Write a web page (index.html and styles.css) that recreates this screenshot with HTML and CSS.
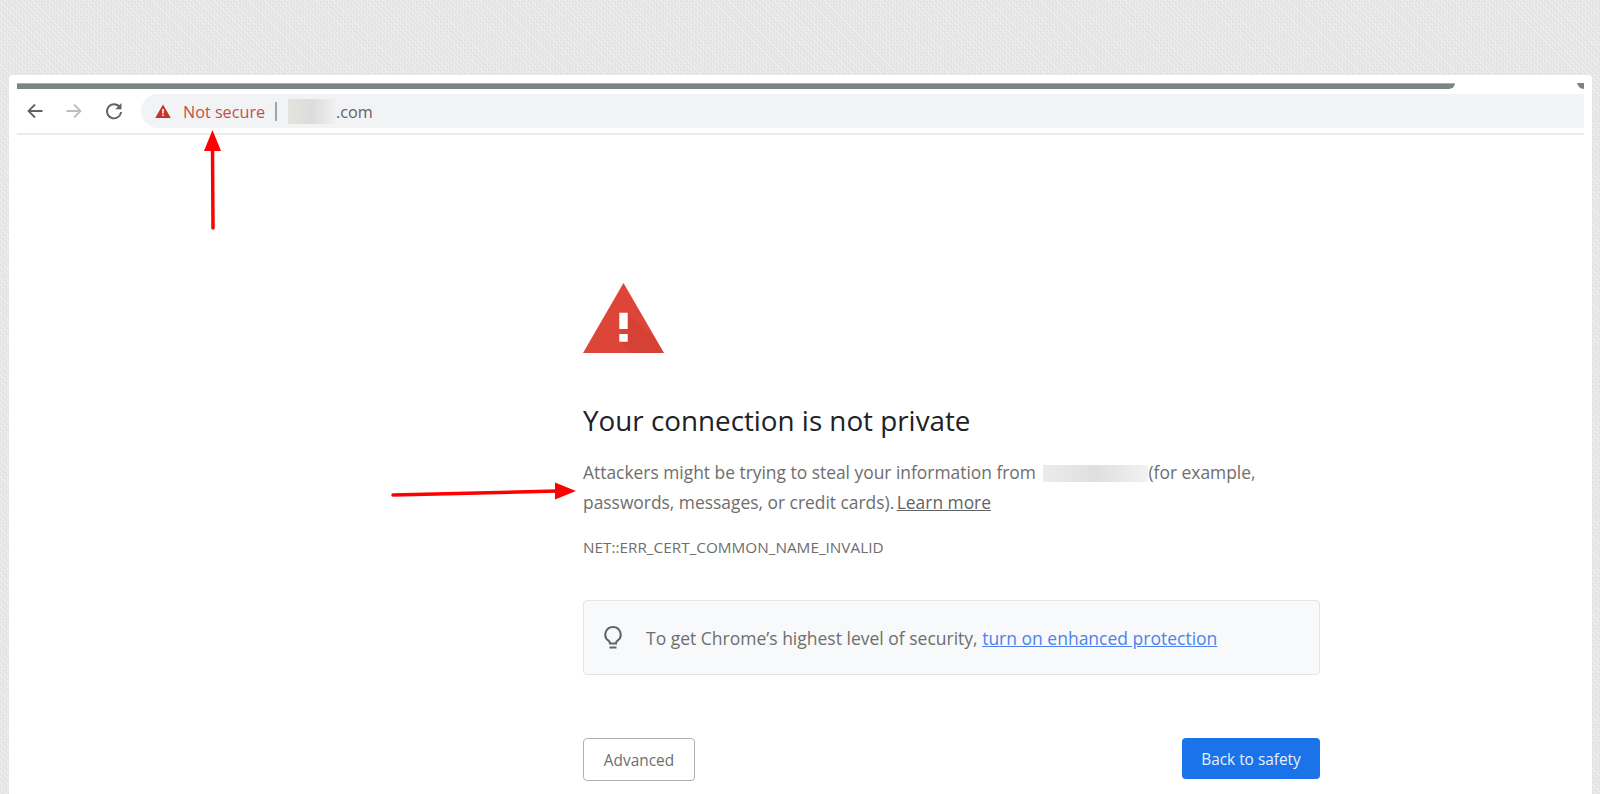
FILE: index.html
```html
<!DOCTYPE html>
<html lang="en">
<head>
<meta charset="utf-8">
<title>Privacy error</title>
<link rel="stylesheet" href="styles.css">
</head>
<body>
<div class="window">
  <div class="tabstrip">
    <div class="tabbar"></div>
    <svg class="corner" width="7" height="6" viewBox="0 0 7 6"><path d="M0 0H7V6C3 6 1 3 0 0Z" fill="#7b8585"/></svg>
  </div>
  <div class="toolbar">
    <svg class="nav" width="22" height="22" viewBox="0 0 22 22"><path d="M18.5 11H5M11 4.5 4.5 11l6.500 6.500" fill="none" stroke="#5f6368" stroke-width="1.800"/></svg>
    <svg class="nav" width="22" height="22" viewBox="0 0 22 22"><path d="M3.500 11H17M11 4.500 17.500 11 11 17.500" fill="none" stroke="#bcbec1" stroke-width="1.800"/></svg>
    <svg class="nav" width="22" height="22" viewBox="0 0 22 22"><path d="M16.700 7.200A7 7 0 1 0 18 12" fill="none" stroke="#5f6368" stroke-width="1.900"/><path d="M18.500 3v6.200h-6.200z" fill="#5f6368"/></svg>
    <div class="omnibox">
      <svg class="warn" width="16" height="14" viewBox="0 0 16 14"><path d="M8 .5 15.800 14H.2Z" fill="#c5352b"/><path d="M7.200 5h1.600v4.500H7.200zM7.200 10.500h1.600v1.600H7.200z" fill="#fff"/></svg>
      <span class="secure">Not secure</span>
      <span class="sep"></span>
      <span class="blur-host"></span><span class="domain">.com</span>
    </div>
  </div>
  <div class="divider"></div>
  <main class="interstitial">
    <svg class="alert" width="81" height="70" viewBox="0 0 81 70">
      <path d="M40.500 0 81 70H0Z" fill="#dd4539"/>
      <path d="M44.500 30 72 55 81 70H49L36.500 58.500Z" fill="#b8322a" opacity=".2"/>
      <path d="M36.300 29.700h8.400V46h-8.400zM36.300 51h8.400v7.700h-8.400z" fill="#fff"/>
    </svg>
    <h1 class="title">Your connection is not private</h1>
    <p class="message">Attackers might be trying to steal your information from <span class="blur-site"></span>(for example,<br>passwords, messages, or credit cards). <a class="learn" href="#">Learn more</a></p>
    <p class="code">NET::ERR_CERT_COMMON_NAME_INVALID</p>
    <div class="promo">
      <svg class="bulb" width="20" height="26" viewBox="0 0 20 26"><path d="M10 2a7.600 7.600 0 0 0-4.300 13.900c.9.700 1.300 1.500 1.300 2.600h6c0-1.100.4-1.900 1.300-2.600A7.600 7.600 0 0 0 10 2Z" fill="none" stroke="#5f6368" stroke-width="2"/><path d="M6.500 22.500h7" stroke="#5f6368" stroke-width="2"/></svg>
      <p class="promo-text">To get Chrome’s highest level of security, <a class="enhance" href="#">turn on enhanced protection</a></p>
    </div>
    <div class="actions">
      <button class="btn-advanced" type="button">Advanced</button>
      <button class="btn-back" type="button">Back to safety</button>
    </div>
  </main>
  <svg class="arrow arrow-up" width="24" height="100" viewBox="0 0 24 100"><path d="M12 98 11.500 18" stroke="#f00" stroke-width="3.500" stroke-linecap="round"/><path d="M11.500 0 20 21H3Z" fill="#f00"/></svg>
  <svg class="arrow arrow-right" width="186" height="24" viewBox="0 0 186 24"><path d="M2 16 166 12" stroke="#f00" stroke-width="3.500" stroke-linecap="round"/><path d="M185 12 164 3.500V20.500Z" fill="#f00"/></svg>
</div>
</body>
</html>
```

FILE: styles.css
```css
* { box-sizing: border-box; }
html, body { margin: 0; height: 794px; overflow: hidden; }
body {
  padding: 75px 8px 0 9px;
  background-color: #e5e5e5;
  background-image:
    repeating-linear-gradient(45deg, rgba(255,255,255,.28) 0 1px, transparent 1px 4px),
    repeating-conic-gradient(#e9e9e9 0 25%, #e1e1e1 0 50%);
  background-size: auto, 3px 3px;
  font-family: "Open Sans", "Noto Sans", sans-serif;
}
.window {
  position: relative;
  height: 760px;
  overflow: hidden;
  padding: 8px 8px 0;
  background: #fff;
  border-radius: 4px 4px 0 0;
}
.tabstrip { display: flex; justify-content: space-between; height: 6px; }
.tabbar {
  width: 1438px;
  background: #7b8585;
  border-top: 1px solid #a9afaf;
  border-bottom-right-radius: 7px;
}
.toolbar { display: flex; align-items: center; height: 34px; margin-top: 5px; }
.nav { flex: none; margin-right: 17px; }
.nav:first-child { margin-left: 7px; }
.nav:nth-child(3) { margin-left: 1px; margin-right: 16px; }
.omnibox {
  flex: 1;
  display: flex;
  align-items: center;
  height: 100%;
  padding-left: 14px;
  background: #f1f3f4;
  border-radius: 17px 0 0 17px;
  font-size: 16.200px;
}
.warn { flex: none; }
.secure { margin-left: 12px; color: #c54f47; padding-top: 1px; }
.sep { width: 2px; height: 19px; margin: 0 11px 0 10px; background: #a2a5a8; }
.blur-host {
  width: 48px;
  height: 25px;
  background: linear-gradient(90deg, #e3e3e0, #dcdcda 50%, #f1f1f1);
}
.domain { color: #5f6368; padding-top: 1px; }
.divider { height: 2px; margin-top: 5px; background: #ebebeb; }
.interstitial { width: 737px; margin-left: 566px; padding-top: 148px; color: #6e6e6e; }
.alert { display: block; }
.title {
  margin: 48px 0 0;
  color: #202124;
  font-size: 27.800px;
  font-weight: 400;
  line-height: 38px;
}
.message { margin: 19px 0 0; font-size: 17.400px; line-height: 29.500px; }
.blur-site {
  display: inline-block;
  width: 105px;
  height: 17px;
  margin-left: 3px;
  vertical-align: -3px;
  background: linear-gradient(90deg, #ececec, #dfdfdf 50%, #f2f2f2);
}
.learn { margin-left: -2px; color: #5f6368; }
.code { margin: 20px 0 0; font-size: 15.300px; line-height: 20px; }
.promo {
  display: flex;
  align-items: center;
  gap: 23px;
  height: 75px;
  margin-top: 43px;
  padding: 0 19px;
  background: #f8f9fa;
  border: 1px solid #e3e4e6;
  border-radius: 4px;
  font-size: 17.500px;
}
.promo-text { margin: 0; }
.enhance { color: #4d82ee; }
.actions { display: flex; justify-content: space-between; align-items: flex-start; margin-top: 63px; }
.btn-advanced, .btn-back { padding: 2px 0 0; font-family: inherit; font-size: 15.400px; border-radius: 4px; }
.btn-advanced { width: 112px; height: 43px; color: #6e6e6e; background: #fff; border: 1px solid #aeb1b3; }
.btn-back { width: 138px; height: 41px; color: #e8f0fe; background: #1a73e8; border: 0; }
.arrow { position: absolute; }
.arrow-up { left: 192px; top: 55px; }
.arrow-right { left: 382px; top: 404px; }
```
